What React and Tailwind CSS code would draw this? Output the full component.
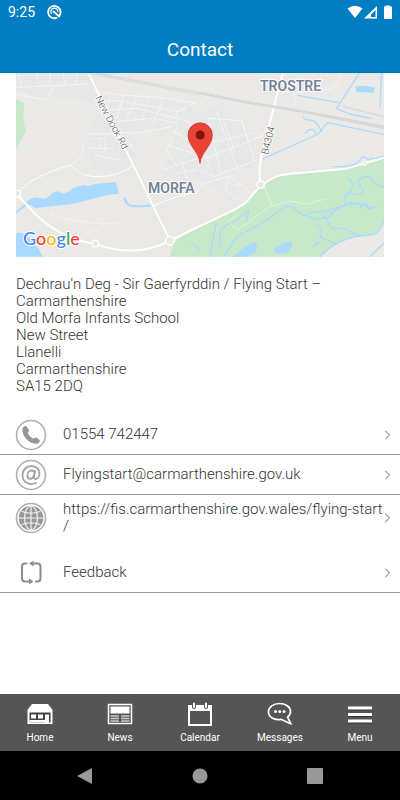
import React from "react";

const stroke = (color, width) => ({
  fill: "none",
  stroke: color,
  strokeWidth: width,
  strokeLinecap: "round",
  strokeLinejoin: "round",
});

function StatusBar() {
  return (
    <div className="flex h-6 items-center justify-between px-2 text-white">
      <div className="flex items-center gap-3">
        <span className="text-sm">9:25</span>
        <svg className="size-4" viewBox="0 0 16 16" aria-hidden="true">
          <path d="M9.500 13.900A6.200 6.200 0 1 1 12.800 11" {...stroke("#fff", 1.8)} />
          <path d="M4.300 9.500A3.500 3.500 0 1 1 10.800 7.500" {...stroke("#fff", 1.2)} />
          <path d="M6.500 7.500 12.300 12.500" {...stroke("#fff", 2)} />
        </svg>
      </div>
      <svg className="h-4 w-[45px]" viewBox="347 4 45 16" fill="#fff" aria-hidden="true">
        <path d="M347.5 8.5Q355 3 362.5 8.5L355 18Z" />
        <path d="M364 18.5 377 6V18.500Z" />
        <path d="M371 14.500 375.500 10V17H371Z" fill="#007dc3" />
        <path d="M385.500 6.500V5.500H390V6.500H392V19H384V6.500Z" />
      </svg>
    </div>
  );
}

function Map() {
  return (
    <svg
      className="mx-4 block"
      viewBox="16 73 368 184"
      role="img"
      aria-label="Map of Morfa"
      fontFamily="Roboto, sans-serif"
    >
      <rect x="16" y="73" width="368" height="184" fill="#ebe9e6" />

      <g transform="translate(10 70) scale(.33333)">
        <path d="M18 9H235L262 75 340 80 420 85 470 90 520 100 570 130V330H500L450 310 470 270 495 235 480 170 375 185 390 225 350 290 275 305 240 290 235 190 250 150 265 100 190 85 110 92 18 60Z" fill="#e7e7e8" />
        <path d="M18 88 42 100 40 145 47 185 30 215 18 240Z" fill="#c7e8c9" />
        <path d="M480 560 490 520 520 495 570 468V560Z" fill="#c7e8c9" />
        <path d="M18 425C40 410 50 388 75 382L105 386C120 378 135 356 150 366 165 378 180 362 190 354L220 345C235 352 245 345 255 342L318 336 327 371 290 375 190 402 75 414 55 403 18 431Z" fill="#aadaff" />
        <path d="M18 490C45 478 65 515 85 535L98 560H18Z" fill="#aadaff" />
        <path d="M344 386C350 408 360 413 420 407" {...stroke("#aadaff", 7)} />
        <path d="M545 520 570 538" {...stroke("#aadaff", 4)} />
        <g {...stroke("#fafafa", 2)}>
          <path d="M18 52 240 42M25 15 35 50M82 10 85 48M120 10V45M160 10 165 45M200 10V42M18 72 110 90 130 50" />
          <path d="M255 65 330 75 455 82 555 100M265 95 330 92 505 125M285 120 380 115 500 145M315 155 430 145 500 160M325 185 375 190 485 170M300 80 285 150M340 78 320 145M380 78 350 145M420 80 395 150M460 85 430 160" />
          <path d="M555 98 500 125 505 160 470 245M500 140 560 170M485 180 535 210M475 225 550 250M525 110 515 145M470 245 500 285 460 300M500 285 565 265M500 310 560 300M515 275 530 325" />
          <path d="M228 192H325M247 205H285V245M240 235H310M268 205V235M220 215 215 260 180 285M255 255 330 270M340 200 375 240" />
          <path d="M120 430 190 452 275 462 330 458M275 445V475M265 480 230 490" strokeOpacity=".7" />
        </g>
        <path d="M22 370C50 335 90 315 180 285 205 310 230 320 260 320 310 320 340 305 367 289M428 408 500 380 565 365" {...stroke("#fff", 3)} />
        <path d="M18 368C50 405 65 425 95 450 145 490 200 515 255 521 330 550 410 550 480 512L570 468" {...stroke("#fff", 6)} />
        <path d="M235 9 480 512" {...stroke("#fff", 5)} />
        <path d="M235 9 570 74M260 9 570 68" {...stroke("#d8dadb", 4)} />
        <circle cx="22" cy="371" r="10" fill="#ebe9e6" stroke="#fff" strokeWidth="4" />
        <circle cx="256" cy="521" r="10" fill="#ebe9e6" stroke="#fff" strokeWidth="4" />
        <circle cx="480" cy="512" r="13" fill="#ebe9e6" stroke="#fff" strokeWidth="4" />
        <circle cx="123" cy="432" r="5" fill="none" stroke="#f6f6f6" strokeWidth="2" />
      </g>

      <g transform="translate(200 70) scale(.33333)">
        <path d="M0 130 50 105 140 150 170 280 90 320 120 370 90 400 50 360 0 330Z" fill="#e7e7e8" />
        <path d="M0 468C60 440 110 420 135 400L180 350C220 318 240 313 290 310L440 296 552 263V455C540 490 520 495 480 498 430 505 390 530 365 560H0Z" fill="#c7e8c9" />
        <path d="M95 560C130 540 145 510 173 520L168 545 140 560ZM220 540C240 520 270 510 276 518 275 535 270 555 230 551ZM335 528 355 514 361 520 340 532ZM465 50 495 47 525 53 520 68 470 66Z" fill="#aadaff" />
        <g {...stroke("#aadaff", 4)}>
          <path d="M205 165 232 70M293 76 415 98M477 10 410 115M408 115 450 132 515 146M545 10 540 110M382 158 552 193M382 158 355 192 190 266M310 140C315 160 335 140 350 160L365 184M316 190C330 170 345 178 348 192" />
          <path d="M400 290C440 290 465 290 480 270 490 245 500 280 515 265 530 270 535 260 552 258M552 455C535 495 525 496 475 498 430 506 385 530 360 560M510 560 552 520" />
          <path d="M72 560 110 500C140 480 180 470 220 435 245 415 265 400 285 415 300 440 325 435 345 448L385 442 410 418 435 405C440 385 430 380 445 368 480 380 500 365 483 350 460 330 485 318 512 320 520 345 535 345 552 352" />
          <path d="M443 323C465 340 460 355 445 368M320 435C330 420 350 430 375 422 440 415 455 380 515 415M348 465C375 475 350 485 365 505L405 518M370 435C390 450 380 465 400 478 425 465 455 490 480 498M450 395 465 405 475 398 483 412 498 400 505 416 530 410" />
          <path d="M30 560 48 460M50 535C75 530 50 505 65 480 75 455 110 460 125 435 145 430 140 420 148 422L138 455" />
        </g>
        <g {...stroke("#fafafa", 2)}>
          <path d="M25 145 125 152 165 275M25 145 60 300M50 125 115 305M70 150 105 250M0 270 190 198M0 225 155 190M5 300 40 320 15 250M40 320 170 270M0 345 90 318 158 372M90 318 75 360 110 385M100 345H120M125 152 145 215 190 195" />
          <path d="M425 10C405 60 395 60 365 58M0 100 40 55M280 70 285 100" />
          <path d="M195 352 215 408 270 393 320 402 388 384M215 408C180 425 160 450 110 480L85 455 110 435" strokeOpacity=".8" />
        </g>
        <path d="M0 468C60 440 110 420 135 400L180 350C220 318 240 313 290 310L440 296 552 263" {...stroke("#fff", 6)} />
        <path d="M248 10 190 230C180 280 175 300 182 345" {...stroke("#fff", 6)} />
        <path d="M0 69 130 95 350 132 552 170" {...stroke("#d5d8d9", 8)} />
        <path d="M360 137 552 176M430 110 552 140" {...stroke("#d5d8d9", 4)} />
        <circle cx="182" cy="344" r="11" fill="#ebe9e6" stroke="#fff" strokeWidth="4" />
        <circle cx="495" cy="280" r="6" fill="#ebe9e6" stroke="#fff" strokeWidth="3" />
      </g>

      <g stroke="#fff" strokeWidth="2" paintOrder="stroke" strokeLinejoin="round">
        <text x="260" y="91" fontSize="14" fontWeight="600" fill="#738199">TROSTRE</text>
        <text x="148" y="193" fontSize="14" fontWeight="600" fill="#738199">MORFA</text>
        <text transform="translate(95 98) rotate(62)" fontSize="10" fill="#4a4e53">New Dock Rd</text>
        <text transform="translate(268 155) rotate(-76)" fontSize="10" fill="#4a4e53">B4304</text>
        <text x="23" y="245" fontSize="18" fontWeight="500" fontFamily="Lato, sans-serif">
          <tspan fill="#4285f4">G</tspan>
          <tspan fill="#ea4335">o</tspan>
          <tspan fill="#fbbc05">o</tspan>
          <tspan fill="#4285f4">g</tspan>
          <tspan fill="#34a853">l</tspan>
          <tspan fill="#ea4335">e</tspan>
        </text>
      </g>

      <path d="M200 163.500C199.500 152 188 146 188 135A12.200 12.200 0 0 1 212.400 135C212.400 146 201 152 200 163.500Z" fill="#ea4335" stroke="#c5322b" strokeWidth=".7" />
      <circle cx="200.200" cy="135" r="4.500" fill="#7d1411" />
    </svg>
  );
}

function PhoneIcon() {
  return (
    <svg className="size-8" viewBox="0 0 32 32" aria-hidden="true">
      <circle cx="16" cy="16" r="14.500" fill="none" stroke="#b0b0b0" strokeWidth="1.600" />
      <path d="M7.800 9C8.500 7.500 10.500 6.500 11.500 7.500L14 11C14.600 12.300 12.600 13.300 13 14.500 14 16.500 16 18.500 18 19.500 19.200 19.800 20 18 21.300 18.500L24.500 20.700C25.500 22 24 24 22.600 24.400 15.500 26.500 5.500 16.500 7.800 9Z" fill="#979797" />
    </svg>
  );
}

function AtIcon() {
  return (
    <svg className="size-8" viewBox="0 0 32 32" aria-hidden="true">
      <circle cx="16" cy="16" r="14.500" fill="none" stroke="#b0b0b0" strokeWidth="1.600" />
      <path d="M21 24C14 27 7.500 23 7.500 16.500 7.500 10.500 11.500 7 16.500 7 21.500 7 24.500 10.500 24.500 14.500 24.500 18 22.700 20 20.800 20 19 20 18.700 18.500 19 17L20.200 11.800M19.500 14.500C19.500 12.500 18.200 11.500 16.700 11.500 14 11.500 12.400 14 12.400 16.500 12.400 18.500 13.300 19.800 15 19.800 17.200 19.800 18.900 17.500 19.500 14.500" {...stroke("#a3a3a3", 1.8)} />
    </svg>
  );
}

function GlobeIcon() {
  return (
    <svg className="size-8" viewBox="0 0 32 32" aria-hidden="true">
      <circle cx="16" cy="16" r="14.500" fill="#fff" stroke="#b0b0b0" strokeWidth="1.600" />
      <circle cx="16" cy="16" r="12.300" fill="#999" />
      <g {...stroke("#f2f2f2", 1.2)}>
        <path d="M16 4V28M4 16H28M7 9.500Q16 13 25 9.500M7 22.500Q16 19 25 22.500" />
        <ellipse cx="16" cy="16" rx="6.500" ry="12" />
      </g>
    </svg>
  );
}

function FeedbackIcon() {
  return (
    <svg className="size-8" viewBox="0 0 32 32" aria-hidden="true">
      <path d="M11.500 6.500H10Q7 6.500 7 9.500V21.500Q7 24.500 10 24.500H15M21 24.500H22.500Q25.500 24.500 25.500 21.500V9.500Q25.500 6.500 22.500 6.500H17" {...stroke("#8c8c8c", 2)} />
      <path d="M18.500 3.500V9.500L14 6.500ZM14 21.500V27.500L18.500 24.500Z" fill="#8c8c8c" />
    </svg>
  );
}

function Row({ href, icon, children, className }) {
  return (
    <a href={href} className={`flex items-center pr-2 pl-[15px] ${className}`}>
      {icon}
      <span className="ml-4 min-w-0 flex-1">{children}</span>
      <svg className="h-3 w-2 shrink-0" viewBox="0 0 8 12" aria-hidden="true">
        <path d="M1.500 2 5.500 6 1.500 10" {...stroke("#666", 1)} />
      </svg>
    </a>
  );
}

function HomeIcon() {
  return (
    <svg className="h-6 w-7" viewBox="0 0 28 24" aria-hidden="true">
      <path d="M6 2H22L26.500 8V22H1.500V8Z" fill="#fff" />
      <path d="M3.500 10.500H24.500V20.500H3.500Z" fill="#444" />
      <path d="M5 12.500H10V16.500H5ZM12 12.500H17V16.500H12ZM19 12.500H23V21H19ZM3.500 18H19V20.500H3.500Z" fill="#fff" />
    </svg>
  );
}

function NewsIcon() {
  return (
    <svg className="h-6 w-7" viewBox="0 0 28 24" aria-hidden="true">
      <rect x="2.500" y="2.500" width="23" height="19" fill="#555" stroke="#fff" strokeWidth="1.500" />
      <rect x="4.500" y="4.500" width="19" height="7" fill="#fff" />
      <path d="M4.500 14H13M15 14H23.500M4.500 16.500H13M15 16.500H23.500M4.500 19H13M15 19H23.500" stroke="#ccc" strokeWidth="1.500" />
    </svg>
  );
}

function CalendarIcon() {
  return (
    <svg className="h-6 w-7" viewBox="0 0 28 24" aria-hidden="true">
      <path d="M2 3H26V24H2ZM4 9V22H24V9Z" fill="#fff" fillRule="evenodd" />
      <path d="M8 1.500V5M20 1.500V5" {...stroke("#555", 4)} />
      <path d="M8 1.500V5M20 1.500V5" {...stroke("#fff", 2)} />
    </svg>
  );
}

function MessagesIcon() {
  return (
    <svg className="h-6 w-7" viewBox="0 0 28 24" aria-hidden="true">
      <path d="M15 17.300C8 18.500 2.500 15 2.500 9.700 2.500 5 7.500 1.500 13.500 1.500S24.500 5 24.500 9.500C24.500 12 23.200 14 21.500 15.200L25 22Z" {...stroke("#fff", 1.7)} />
      <circle cx="9.500" cy="9.500" r="1.500" fill="#fff" />
      <circle cx="13.700" cy="9.500" r="1.500" fill="#fff" />
      <circle cx="18" cy="9.500" r="1.500" fill="#fff" />
    </svg>
  );
}

function MenuIcon() {
  return (
    <svg className="h-6 w-7" viewBox="0 0 28 24" aria-hidden="true">
      <path d="M2 7H26M2 13.500H26M2 20H26" stroke="#333" strokeWidth="3" />
      <path d="M2 6H26M2 12.500H26M2 19H26" stroke="#fff" strokeWidth="3" />
    </svg>
  );
}

const tabs = [
  ["Home", HomeIcon],
  ["News", NewsIcon],
  ["Calendar", CalendarIcon],
  ["Messages", MessagesIcon],
  ["Menu", MenuIcon],
];

export default function App() {
  return (
    <div className="flex min-h-screen flex-col bg-white font-[Roboto,sans-serif] text-[#333]">
      <header className="border-b border-[#0070b5] bg-[#007dc3]">
        <StatusBar />
        <h1 className="flex h-12 items-center justify-center pt-1 text-[19px] text-white">Contact</h1>
      </header>

      <main className="flex-1 text-[15px] leading-[17px] font-light">
        <Map />
        <address className="mx-4 mt-[19px] not-italic">
          Dechrau'n Deg - Sir Gaerfyrddin / Flying Start – Carmarthenshire
          <br />
          Old Morfa Infants School
          <br />
          New Street
          <br />
          Llanelli
          <br />
          Carmarthenshire
          <br />
          SA15 2DQ
        </address>

        <div className="mt-5">
          <Row href="tel:01554742447" icon={<PhoneIcon />} className="h-10 border-b border-[#999]">
            01554 742447
          </Row>
          <Row href="mailto:Flyingstart@carmarthenshire.gov.uk" icon={<AtIcon />} className="h-10 border-b border-[#999]">
            Flyingstart@carmarthenshire.gov.uk
          </Row>
          <Row href="https://fis.carmarthenshire.gov.wales/flying-start/" icon={<GlobeIcon />} className="mb-3 min-h-[46px]">
            <span className="whitespace-nowrap">https://fis.carmarthenshire.gov.wales/flying-start</span>
            <wbr />/
          </Row>
          <Row href="#feedback" icon={<FeedbackIcon />} className="h-10 border-b border-[#999]">
            Feedback
          </Row>
        </div>
      </main>

      <nav className="grid h-[57px] grid-cols-5 bg-[#555] text-white">
        {tabs.map(([label, Icon]) => (
          <button key={label} type="button" className="flex flex-col items-center gap-1 pt-2 text-[10px] leading-4">
            <Icon />
            {label}
          </button>
        ))}
      </nav>

      <div className="flex h-[49px] items-center justify-center gap-[99px] bg-black">
        <button type="button" aria-label="Back">
          <svg className="size-4" viewBox="0 0 16 16" fill="#999">
            <path d="M0 8 15 0V16Z" />
          </svg>
        </button>
        <button type="button" aria-label="Home screen">
          <svg className="size-4" viewBox="0 0 16 16" fill="#999">
            <circle cx="8" cy="8" r="7.500" />
          </svg>
        </button>
        <button type="button" aria-label="Recent apps">
          <svg className="size-4" viewBox="0 0 16 16" fill="#999">
            <rect width="16" height="16" rx="1" />
          </svg>
        </button>
      </div>
    </div>
  );
}
